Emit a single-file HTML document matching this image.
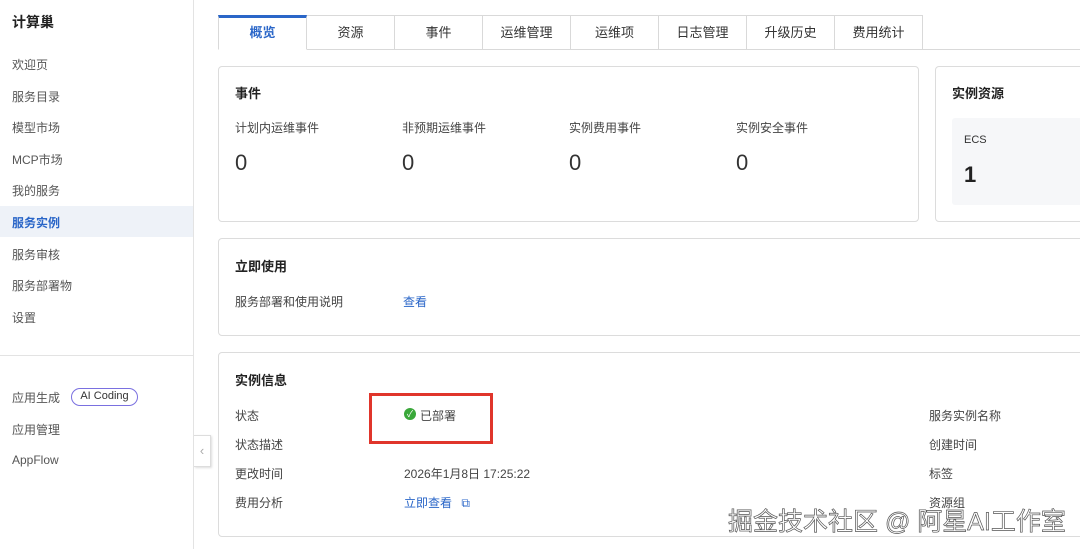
<!DOCTYPE html>
<html><head><meta charset="utf-8"><style>
*{margin:0;padding:0;box-sizing:border-box}
body{width:1080px;height:549px;overflow:hidden;background:#fff;font-family:"Liberation Sans","Noto Sans CJK SC",sans-serif;color:#333;position:relative;font-size:12px}
.a{position:absolute;white-space:nowrap}
.side{position:absolute;left:0;top:0;width:194px;height:549px;border-right:1px solid #e3e3e3}
.nav{position:absolute;left:12px;font-size:12px;color:#555}
.card{position:absolute;border:1px solid #dcdcdc;border-radius:4px;background:#fff}
.tab{position:absolute;top:15px;height:35px;width:88px;border:1px solid #d9d9d9;border-left:none;font-size:13px;color:#333;text-align:center;line-height:33px;background:#fff}
.h{font-size:13px;font-weight:bold;color:#222}
.lbl{font-size:12px;color:#444}
.num{font-size:22px;color:#333}
</style></head><body>
<div class="side">
<div class="a h" style="left:12px;top:12px;font-size:14px">计算巢</div>
<div class="nav" style="top:56px">欢迎页</div>
<div class="nav" style="top:88px">服务目录</div>
<div class="nav" style="top:119px">模型市场</div>
<div class="nav" style="top:151px">MCP市场</div>
<div class="nav" style="top:182px">我的服务</div>
<div style="position:absolute;left:0;top:206px;width:193px;height:31px;background:#eef2f8"></div>
<div class="nav" style="top:214px;color:#2a66c8;font-weight:bold">服务实例</div>
<div class="nav" style="top:246px">服务审核</div>
<div class="nav" style="top:277px">服务部署物</div>
<div class="nav" style="top:309px">设置</div>
<div style="position:absolute;left:0;top:355px;width:193px;border-top:1px solid #e3e3e3"></div>
<div class="nav" style="top:389px">应用生成</div>
<div class="a" style="left:71px;top:388px;width:67px;height:18px;border:1.5px solid #7a70e0;border-radius:9px;font-size:11px;line-height:15px;text-align:center;color:#333">AI Coding</div>
<div class="nav" style="top:421px">应用管理</div>
<div class="nav" style="top:453px">AppFlow</div>
</div>
<div class="a" style="left:194px;top:435px;width:17px;height:32px;border:1px solid #ddd;border-left:none;background:#fff;color:#aaa;font-size:13px;line-height:30px;text-align:center;box-shadow:1px 1px 2px #ddd">‹</div>

<div style="position:absolute;left:218px;top:49px;width:862px;border-top:1px solid #d9d9d9"></div>
<div class="tab" style="left:218px;width:89px;border-left:1px solid #d9d9d9;border-top:3px solid #2a66c8;border-bottom-color:#fff;color:#2a66c8;font-weight:bold;line-height:30px">概览</div>
<div class="tab" style="left:307px">资源</div>
<div class="tab" style="left:395px">事件</div>
<div class="tab" style="left:483px">运维管理</div>
<div class="tab" style="left:571px">运维项</div>
<div class="tab" style="left:659px">日志管理</div>
<div class="tab" style="left:747px">升级历史</div>
<div class="tab" style="left:835px">费用统计</div>

<div class="card" style="left:218px;top:66px;width:701px;height:156px">
<div class="a h" style="left:16px;top:16px">事件</div>
<div class="a lbl" style="left:16px;top:52px">计划内运维事件</div>
<div class="a lbl" style="left:183px;top:52px">非预期运维事件</div>
<div class="a lbl" style="left:350px;top:52px">实例费用事件</div>
<div class="a lbl" style="left:517px;top:52px">实例安全事件</div>
<div class="a num" style="left:16px;top:83px">0</div>
<div class="a num" style="left:183px;top:83px">0</div>
<div class="a num" style="left:350px;top:83px">0</div>
<div class="a num" style="left:517px;top:83px">0</div>
</div>
<div class="card" style="left:935px;top:66px;width:160px;height:156px">
<div class="a h" style="left:16px;top:16px">实例资源</div>
<div class="a" style="left:16px;top:51px;width:140px;height:87px;background:#f6f7f9;border-radius:3px"></div>
<div class="a" style="left:28px;top:67px;font-size:11px;color:#333">ECS</div>
<div class="a" style="left:28px;top:95px;font-size:22px;font-weight:bold;color:#222">1</div>
</div>

<div class="card" style="left:218px;top:238px;width:870px;height:98px">
<div class="a h" style="left:16px;top:17px">立即使用</div>
<div class="a lbl" style="left:16px;top:54px">服务部署和使用说明</div>
<div class="a lbl" style="left:184px;top:54px;color:#2a66c8">查看</div>
</div>

<div class="card" style="left:218px;top:352px;width:870px;height:185px">
<div class="a h" style="left:16px;top:17px">实例信息</div>
<div class="a lbl" style="left:16px;top:54px">状态</div>
<div class="a lbl" style="left:16px;top:83px">状态描述</div>
<div class="a lbl" style="left:16px;top:112px">更改时间</div>
<div class="a lbl" style="left:16px;top:141px">费用分析</div>
<div class="a" style="left:185px;top:55px;width:12px;height:12px;border-radius:50%;background:#3aa83a;color:#fff;font-size:9px;line-height:12px;text-align:center">✓</div>
<div class="a lbl" style="left:201px;top:54px">已部署</div>
<div class="a lbl" style="left:185px;top:112px">2026年1月8日 17:25:22</div>
<div class="a lbl" style="left:185px;top:141px;color:#2a66c8">立即查看 <span style="margin-left:6px">⧉</span></div>
<div class="a lbl" style="left:710px;top:54px">服务实例名称</div>
<div class="a lbl" style="left:710px;top:83px">创建时间</div>
<div class="a lbl" style="left:710px;top:112px">标签</div>
<div class="a lbl" style="left:710px;top:141px">资源组</div>
</div>
<div class="a" style="left:369px;top:393px;width:124px;height:51px;border:3px solid #e0352b"></div>
<div class="a" style="left:728px;top:502px;font-size:25px;color:#fff;-webkit-text-stroke:0.7px #555">掘金技术社区 @ 阿星AI工作室</div>
</body></html>
